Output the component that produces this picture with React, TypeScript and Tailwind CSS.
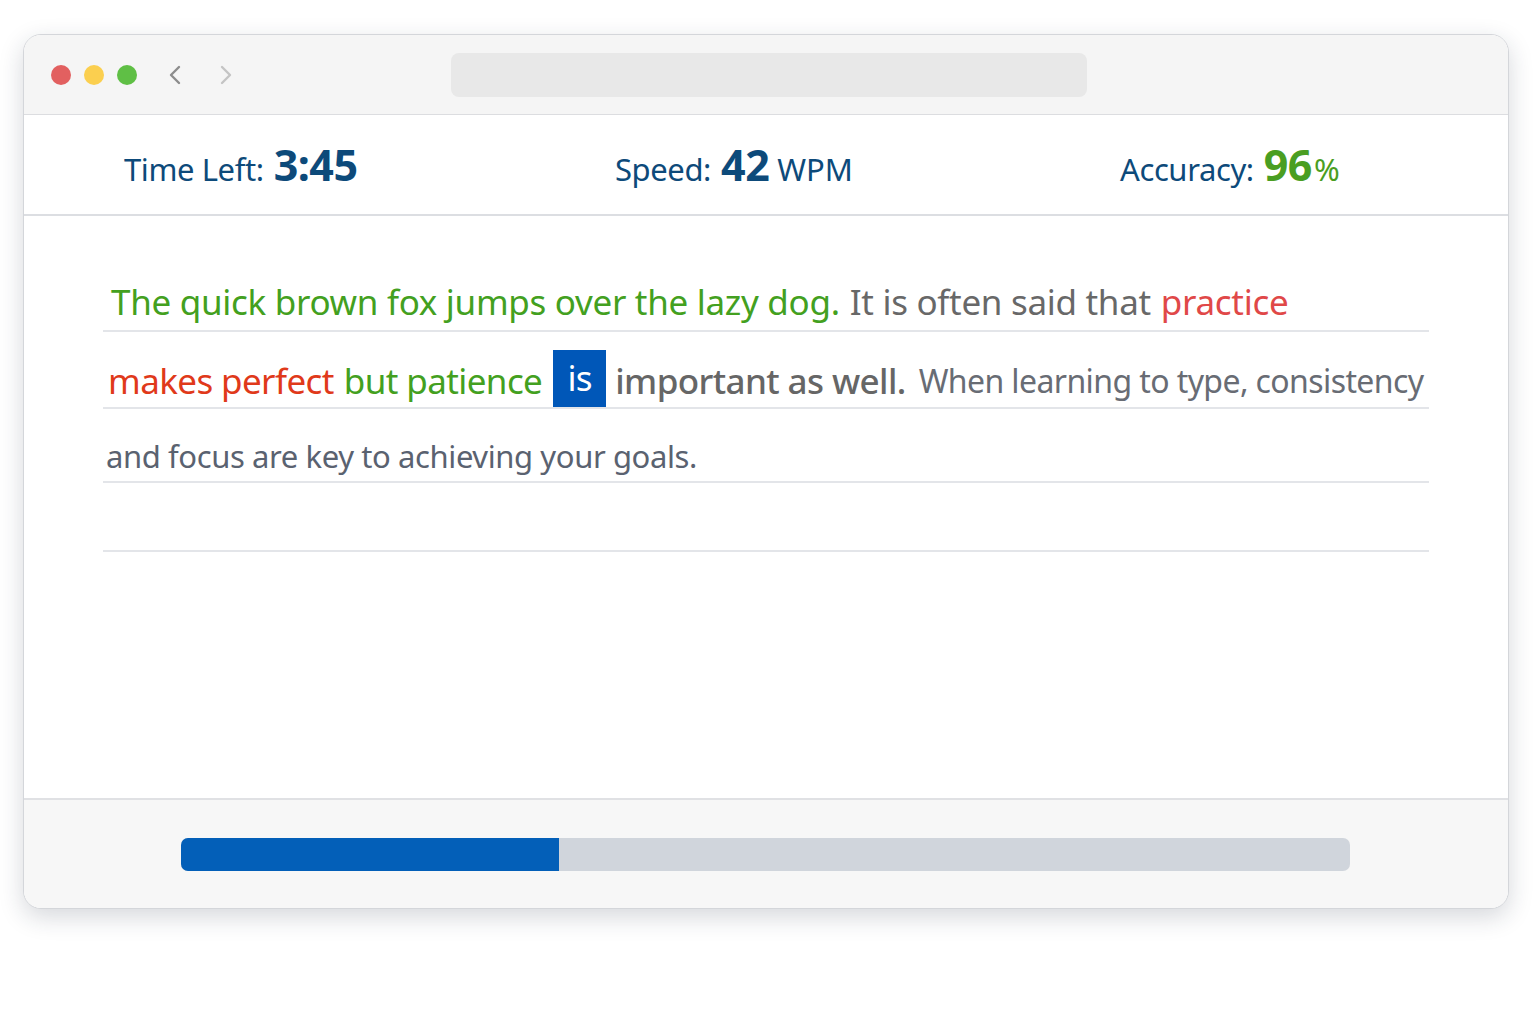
import { ChevronLeft, ChevronRight } from 'lucide-react'

const FONT = { fontFamily: '"Noto Sans", "Open Sans", sans-serif' }

function Stat({ label, value, unit, green }: { label: string; value: string; unit?: string; green?: boolean }) {
  const valueColor = green ? 'text-[#4a9e22]' : 'text-[#0d4a7a]'
  return (
    <div className="flex items-baseline text-[#0d4a7a]">
      <span className="text-[31px] tracking-[-0.4px]">{label}</span>
      <span className={`ml-[10px] text-[43px] font-bold tracking-[-0.5px] ${valueColor}`}>{value}</span>
      {unit && <span className={`${green ? 'ml-[2px] text-[#4a9e22]' : 'ml-[8px]'} text-[31px]`}>{unit}</span>}
    </div>
  )
}

export default function App() {
  return (
    <div className="min-h-screen bg-white pt-[34px] pl-[23px]" style={FONT}>
      <div className="flex h-[875px] w-[1486px] flex-col overflow-hidden rounded-[18px] border border-[#d4d6da] bg-white shadow-[0_8px_24px_rgba(30,40,60,0.18)]">
        {/* title bar */}
        <div className="flex h-[80px] shrink-0 items-center border-b border-[#dcdde0] bg-[#f5f5f5] pl-[27px]">
          <div className="flex gap-[13px]">
            <span className="h-[20px] w-[20px] rounded-full bg-[#e26060]" />
            <span className="h-[20px] w-[20px] rounded-full bg-[#fbcf4f]" />
            <span className="h-[20px] w-[20px] rounded-full bg-[#5fbf45]" />
          </div>
          <ChevronLeft className="ml-[22px] h-[32px] w-[32px] text-[#8c8c8c]" strokeWidth={1.8} />
          <ChevronRight className="ml-[19px] h-[32px] w-[32px] text-[#c4c4c4]" strokeWidth={1.8} />
          <div className="ml-[209px] h-[44px] w-[636px] rounded-[8px] bg-[#e8e8e8]" />
        </div>

        {/* stats */}
        <div className="flex h-[101px] shrink-0 items-center border-b-2 border-[#dcdee2] pt-[2px] pl-[100px]">
          <div className="w-[491px]">
            <Stat label="Time Left:" value="3:45" />
          </div>
          <div className="w-[505px]">
            <Stat label="Speed:" value="42" unit="WPM" />
          </div>
          <Stat label="Accuracy:" value="96" unit="%" green />
        </div>

        {/* text */}
        <div className="flex-1 px-[79px] pt-[39px]">
          <div className="flex h-[77px] items-end whitespace-nowrap border-b-2 border-[#e3e5e9] pb-[2px] pl-[8px] text-[35px] tracking-[-0.3px]">
            <span className="text-[#43a020]">The quick brown fox jumps over the lazy dog.</span>
            <span className="ml-[10px] text-[#686868]">It is often said that</span>
            <span className="ml-[10px] text-[#e04848]">practice</span>
          </div>
          <div className="flex h-[77px] items-end whitespace-nowrap border-b-2 border-[#e3e5e9] pl-[5px] tracking-[-0.6px]">
            <span className="shrink-0 text-[35px] text-[#e0391a]">makes perfect</span>
            <span className="ml-[10px] shrink-0 text-[35px] text-[#43a020]">but patience</span>
            <span className="ml-[11px] flex h-[57px] w-[53px] shrink-0 items-center justify-center bg-[#0057b8] text-[35px] text-white">is</span>
            <span className="ml-[9px] shrink-0 text-[35px] font-medium text-[#666666]">important as well.</span>
            <span className="mb-[2px] ml-[13px] shrink-0 text-[32px] text-[#686c74]">When learning to type, consistency</span>
          </div>
          <div className="flex h-[74px] items-end whitespace-nowrap border-b-2 border-[#e3e5e9] pb-[2px] pl-[3px] text-[31px] tracking-[-0.4px] text-[#5a6270]">
            and focus are key to achieving your goals.
          </div>
          <div className="h-[69px] border-b-2 border-[#e3e5e9]" />
        </div>

        {/* progress */}
        <div className="flex h-[110px] shrink-0 items-center border-t-2 border-[#e0e1e4] bg-[#f7f7f7] pl-[157px]">
          <div className="flex h-[33px] w-[1169px] overflow-hidden rounded-[7px] bg-[#d0d5dc]">
            <div className="h-full bg-[#035fb8]" style={{ width: `${(378 / 1169) * 100}%` }} />
          </div>
        </div>
      </div>
    </div>
  )
}
